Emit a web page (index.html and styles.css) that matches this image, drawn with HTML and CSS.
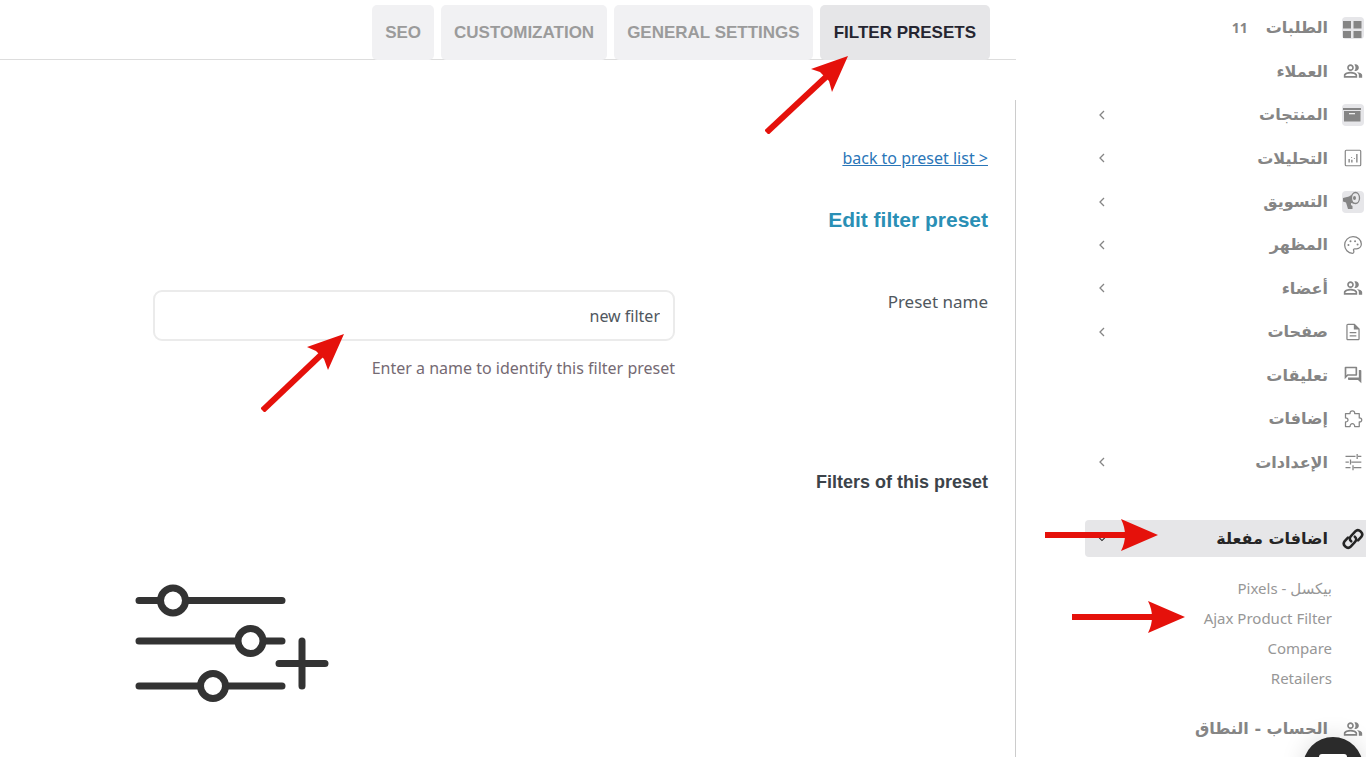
FILE: index.html
```html
<!DOCTYPE html>
<html lang="ar" dir="rtl">
<head>
<meta charset="utf-8">
<title>Filter presets</title>
<link rel="stylesheet" href="styles.css">
</head>
<body>
<svg class="sprite" aria-hidden="true">
  <symbol id="people" viewBox="0 0 24 24"><path d="M16.67 13.13C18.04 14.06 19 15.32 19 17v3h4v-3c0-2.18-3.57-3.47-6.33-3.87zM15 12c2.21 0 4-1.79 4-4s-1.79-4-4-4c-.47 0-.91.1-1.33.24C14.5 5.27 15 6.58 15 8s-.5 2.73-1.33 3.76c.42.14.86.24 1.33.24zM9 12c2.21 0 4-1.79 4-4s-1.79-4-4-4-4 1.79-4 4 1.79 4 4 4zm0-6c1.1 0 2 .9 2 2s-.9 2-2 2-2-.9-2-2 .9-2 2-2zm0 7c-2.67 0-8 1.34-8 4v3h16v-3c0-2.66-5.33-4-8-4zm6 5H3v-.99C3.2 16.29 6.3 15 9 15s5.8 1.29 6 2v1z"/></symbol>
  <symbol id="chevron" viewBox="0 0 10 10"><path d="M7 1L3 5l4 4" fill="none" stroke="currentColor" stroke-width="1.3"/></symbol>
</svg>
<div class="page">
  <aside class="sidebar">
    <nav>
      <ul class="menu">
        <li><a href="#"><span class="icon tile"><svg viewBox="0 0 22 22"><path d="M1 4h8v7.500H1zM11.500 4h8v7.500h-8zM1 14h8v7H1zM11.500 14h8v7h-8z"/></svg></span><span class="label">الطلبات</span><span class="count">11</span></a></li>
        <li><a href="#"><span class="icon"><svg><use href="#people"/></svg></span><span class="label">العملاء</span></a></li>
        <li><a href="#"><span class="icon tile"><svg viewBox="0 0 22 22"><path d="M1 4h18v2H1zM2 7h16.500v10.500H2z"/><path d="M7 9h6v1.300H7z" fill="#eee"/></svg></span><span class="label">المنتجات</span><svg class="chev"><use href="#chevron"/></svg></a></li>
        <li><a href="#"><span class="icon"><svg viewBox="0 0 22 22"><rect x="2.500" y="2.500" width="17" height="17" rx="1" fill="none" stroke="currentColor" stroke-width="1.300"/><path d="M6 12h1.500v4H6zM9 10h1v1H9zM9 13h1.500v3H9zM12 11h1v1h-1zM14.500 6.500H16V16h-1.500z"/></svg></span><span class="label">التحليلات</span><svg class="chev"><use href="#chevron"/></svg></a></li>
        <li><a href="#"><span class="icon tile"><svg viewBox="0 0 22 22"><path d="M1 7l6-1.500 6-4V13l-4-1v2l1.500 1v3H6l-2-6.500-3-1z"/><ellipse cx="13.500" cy="7" rx="4" ry="5.500" fill="#e9e9eb" stroke="currentColor" stroke-width="1.300"/><ellipse cx="12.500" cy="7" rx="1.500" ry="2"/></svg></span><span class="label">التسويق</span><svg class="chev"><use href="#chevron"/></svg></a></li>
        <li><a href="#"><span class="icon"><svg viewBox="0 0 24 24"><path d="M12 2c5.500 0 10 3.900 10 8.800 0 3.200-2.500 5.700-5.700 5.700H14c-1.100.1-1.800 1-1.300 2 .8 1.500.2 3.500-1.300 3.500C6 21.800 2 17.400 2 12S6.400 2 12 2z" fill="none" stroke="currentColor" stroke-width="1.500"/><circle cx="6.500" cy="12" r="1.200"/><circle cx="9" cy="7.500" r="1.200"/><circle cx="14.500" cy="7.500" r="1.200"/><circle cx="17.500" cy="11.500" r="1.200"/></svg></span><span class="label">المظهر</span><svg class="chev"><use href="#chevron"/></svg></a></li>
        <li><a href="#"><span class="icon"><svg><use href="#people"/></svg></span><span class="label">أعضاء</span><svg class="chev"><use href="#chevron"/></svg></a></li>
        <li><a href="#"><span class="icon"><svg viewBox="0 0 24 24"><path d="M8 16h8v1.500H8zm0-4h8v1.500H8zm6-10H6c-1.100 0-2 .9-2 2v16c0 1.100.9 2 2 2h12c1.100 0 2-.9 2-2V8l-6-6zm4.500 18.500h-13v-17H13V9h5.500z"/></svg></span><span class="label">صفحات</span><svg class="chev"><use href="#chevron"/></svg></a></li>
        <li><a href="#"><span class="icon"><svg viewBox="0 0 24 24"><path d="M15 4v7H5.170L4 12.170V4h11m1-2H3c-.55 0-1 .45-1 1v14l4-4h10c.55 0 1-.45 1-1V3c0-.55-.45-1-1-1zm5 4h-2v9H6v2c0 .55.450 1 1 1h11l4 4V7c0-.55-.45-1-1-1z"/></svg></span><span class="label">تعليقات</span></a></li>
        <li><a href="#"><span class="icon"><svg viewBox="0 0 24 24"><path d="M3 5.500h5.500c-.8-4.500 6.300-4.500 5.500 0h5.500v5.300c4-.7 4 5.400 0 4.700V21H14c.3-4.500-5.800-4.500-5.500 0H3v-5.500c4 .3 4-5 0-4.700z" fill="none" stroke="currentColor" stroke-width="1.500" stroke-linejoin="round"/></svg></span><span class="label">إضافات</span></a></li>
        <li><a href="#"><span class="icon"><svg viewBox="0 0 24 24"><path d="M3 5.300h12M18 5.300h4M17 2.500v6M3 12h4M10 12h12M9 9v6M3 18.700h6M13 18.700h9M12 16v6" fill="none" stroke="currentColor" stroke-width="1.500"/></svg></span><span class="label">الإعدادات</span><svg class="chev"><use href="#chevron"/></svg></a></li>
      </ul>
      <a class="active" href="#"><span class="icon"><svg viewBox="0 0 24 24"><g fill="none" stroke="currentColor" stroke-width="2.800" stroke-linecap="round"><path d="M10 14.500c-2-1.600-2-4 0-6l4.500-4.700c3.500-3.600 10 1.500 6.500 6l-3.500 3.700"/><path d="M14 9.500c2 1.600 2 4 0 6l-4.500 4.700c-3.500 3.600-10-1.500-6.500-6L6.500 10.500"/></g></svg></span><span class="label">اضافات مفعلة</span><svg class="chev down"><use href="#chevron"/></svg></a>
      <ul class="submenu">
        <li><a href="#">بيكسل - Pixels</a></li>
        <li><a href="#">Ajax Product Filter</a></li>
        <li><a href="#">Compare</a></li>
        <li><a href="#">Retailers</a></li>
      </ul>
      <a class="account" href="#"><span class="icon"><svg><use href="#people"/></svg></span><span class="label">الحساب - النطاق</span></a>
    </nav>
  </aside>
  <main class="main">
    <nav class="tabs">
      <a class="tab current" href="#">FILTER PRESETS</a>
      <a class="tab" href="#">GENERAL SETTINGS</a>
      <a class="tab" href="#">CUSTOMIZATION</a>
      <a class="tab" href="#">SEO</a>
    </nav>
    <section class="panel">
      <a class="back" href="#" dir="ltr">back to preset list &gt;</a>
      <h1>Edit filter preset</h1>
      <div class="form-row">
        <label for="preset">Preset name</label>
        <div class="field">
          <input id="preset" type="text" value="new filter" aria-describedby="hint">
          <p id="hint">Enter a name to identify this filter preset</p>
        </div>
      </div>
      <h2>Filters of this preset</h2>
      <svg class="sliders" viewBox="0 0 194 120" fill="#fff" stroke="#333" stroke-width="7" stroke-linecap="round">
        <path d="M4 16.500h143M4 57h143M4 102h143M144 79.500h46M167 57v45"/>
        <circle cx="38" cy="16.500" r="12.500"/><circle cx="115.500" cy="57" r="12.500"/><circle cx="78" cy="102" r="12.500"/>
      </svg>
    </section>
  </main>
  <svg class="arrow arrow-tab" viewBox="0 0 84 78"><path d="M1.500 76.500L62 20" stroke-width="6"/><path class="head" d="M83 0L46 13l9 3 9 9 3 11z"/></svg>
  <svg class="arrow arrow-input" viewBox="0 0 84 78"><path d="M1.500 76.500L62 19" stroke-width="6"/><path class="head" d="M83 0L46 13l9 4 8 8 4 11z"/></svg>
  <svg class="arrow arrow-addons" viewBox="0 0 113 32"><path d="M0 16h85" stroke-width="6"/><path class="head" d="M76 0l37 16-37 16q8-16 0-32z"/></svg>
  <svg class="arrow arrow-ajax" viewBox="0 0 113 32"><path d="M0 16h85" stroke-width="6"/><path class="head" d="M76 0l37 16-37 16q8-16 0-32z"/></svg>
  <button class="chat" aria-label="Chat"><svg viewBox="0 0 28 26"><rect width="28" height="26" rx="3" fill="#fff"/></svg></button>
</div>
</body>
</html>
```
FILE: styles.css
```css
* { box-sizing: border-box; }
body { margin: 0; background: #fff; color: #50575e; font: 16px "Noto Sans", sans-serif; }
a { color: inherit; text-decoration: none; }
ul { list-style: none; margin: 0; padding: 0; }
.sprite { display: none; }
.page { position: relative; display: flex; height: 100vh; min-height: 757px; overflow: hidden; }

.sidebar { width: 350px; flex: none; padding: 6px 0 0 69px; color: #858585; font: bold 16px "DejaVu Sans", sans-serif; }
.menu { display: grid; grid-auto-rows: 1fr; height: 478px; }
.menu a, .active, .account { display: flex; align-items: center; height: 100%; padding: 0 2px 0 12px; gap: 14px; }
.icon { display: flex; align-items: center; justify-content: center; width: 22px; height: 22px; flex: none; border-radius: 4px; }
.tile { background: #e6e6e9; }
.icon svg { width: 20px; height: 20px; fill: currentColor; }
.tile svg { width: 22px; height: 22px; }
.count { margin-right: 4px; font: bold 14px "Noto Sans", sans-serif; }
.chev { width: 10px; height: 12px; margin-right: auto; }
.down { height: 8px; transform: rotate(-90deg); }
.active { height: 37px; margin-top: 36px; border-radius: 4px 0 0 4px; background: #e6e6e8; color: #252525; }
.active .icon svg { width: 24px; height: 24px; }
.submenu { padding: 16px 34px 0 0; font: 15px "Noto Sans", "DejaVu Sans", sans-serif; color: #979797; }
.submenu li { display: flex; align-items: center; height: 30px; }
.account { height: 43px; margin-top: 14px; }

.main { flex: 1; min-width: 0; display: flex; flex-direction: column; }
.tabs { display: flex; gap: 7px; height: 60px; padding: 5px 26px 0; border-bottom: 1px solid #ddd; }
.tab { display: flex; align-items: center; height: 55px; padding: 0 13px; border-radius: 5px; background: #f1f1f3; color: #9b9b9b; font: bold 17px "Liberation Sans", sans-serif; }
.current { padding: 0 14px; background: #e6e6e8; color: #252530; }
.panel { flex: 1; margin-top: 40px; padding: 46px 27px 0 153px; border-right: 1px solid #ccc; }
.back { display: block; width: fit-content; line-height: 24px; color: #2a76b8; text-decoration: underline; }
h1 { margin: 36px 0 0; font: bold 21px/28px "Liberation Sans", sans-serif; color: #2a8fb5; }
.form-row { display: grid; grid-template-columns: 313fr 522fr; margin-top: 56px; }
label { font-size: 17px; line-height: 24px; }
input { display: block; width: 100%; height: 51px; padding: 0 13px; border: 2px solid #ebebeb; border-radius: 9px; background: #fff; color: #50575e; font: 16px "Noto Sans", sans-serif; }
#hint { margin: 15px 0 0; line-height: 24px; color: #756a73; }
h2 { margin: 88px 0 0; font: bold 18px/28px "Liberation Sans", sans-serif; color: #3c434a; }
.sliders { display: block; width: 194px; height: 120px; margin: 88px auto 0 -18px; }

.arrow { position: absolute; fill: none; stroke: #e5110b; }
.head { fill: #e5110b; stroke: none; }
.arrow-tab { left: 765px; top: 56px; width: 84px; height: 78px; }
.arrow-input { left: 261px; top: 334px; width: 84px; height: 78px; }
.arrow-addons { left: 1045px; top: 519px; width: 113px; height: 32px; }
.arrow-ajax { left: 1072px; top: 601px; width: 113px; height: 32px; }
.chat { position: absolute; right: 3px; bottom: -40px; width: 60px; height: 60px; padding: 0; border: 0; border-radius: 50%; background: #2b2b2b; box-shadow: 0 0 24px #0002; }
.chat svg { display: block; width: 28px; height: 26px; margin: auto; }
```
